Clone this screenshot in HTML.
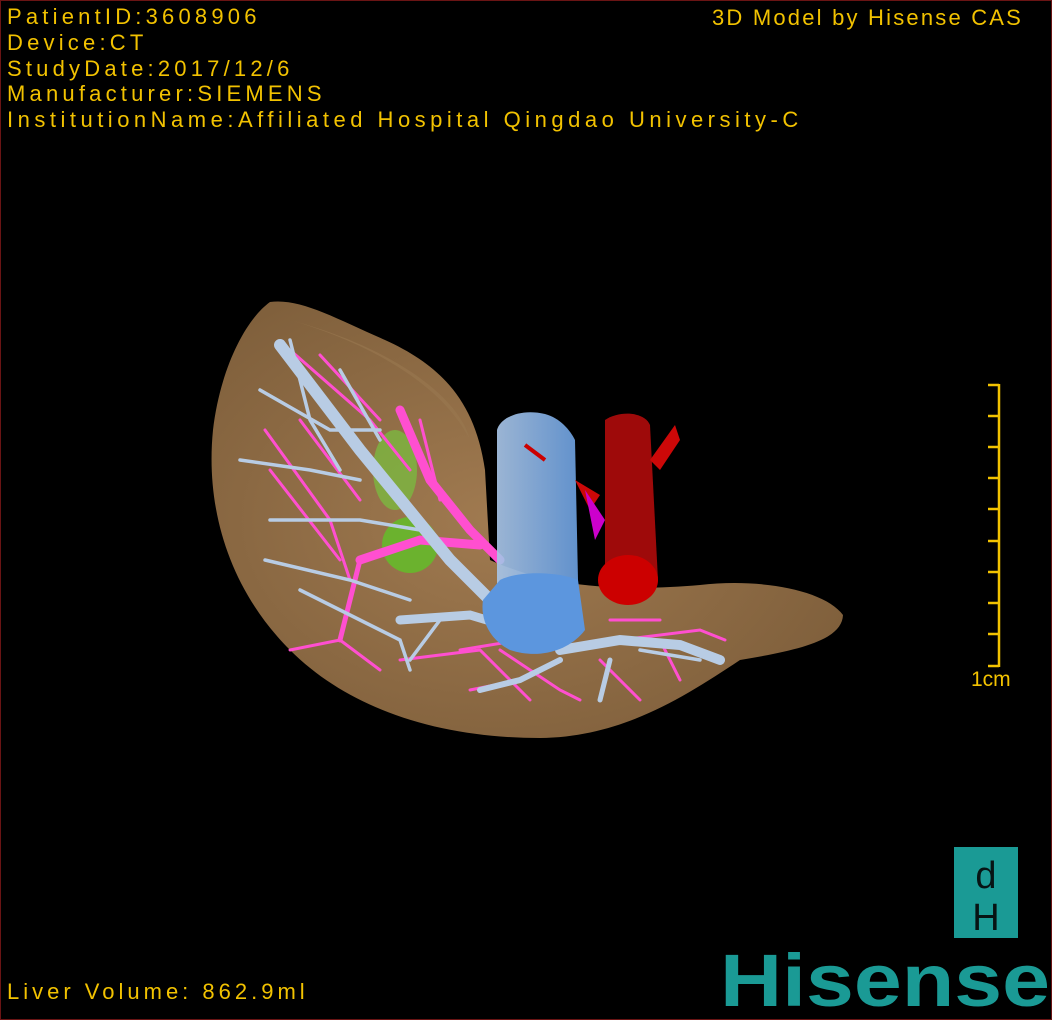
<!DOCTYPE html>
<html><head><meta charset="utf-8"><style>
html,body{margin:0;padding:0;background:#000;}
#wrap{position:relative;width:1050px;height:1018px;border:1px solid #6a1414;background:#000;overflow:hidden;font-family:"Liberation Sans","Noto Sans CJK SC",sans-serif;}
.t{position:absolute;color:#f2c200;font-size:22px;letter-spacing:4.2px;white-space:nowrap;line-height:26px;}
</style></head><body><div id="wrap">
<div class="t" style="left:6px;top:3px">PatientID:3608906</div>
<div class="t" style="left:6px;top:29px">Device:CT</div>
<div class="t" style="left:6px;top:55px">StudyDate:2017/12/6</div>
<div class="t" style="left:6px;top:80px">Manufacturer:SIEMENS</div>
<div class="t" style="left:6px;top:106px;letter-spacing:4.5px">InstitutionName:Affiliated Hospital Qingdao University-C</div>
<div class="t" style="left:711px;top:4px;letter-spacing:2.2px">3D Model by Hisense CAS</div>
<div class="t" style="left:6px;top:978px;letter-spacing:4px">Liver Volume:  862.9ml</div>
<div class="t" style="left:970px;top:666px;font-size:21px;letter-spacing:0">1cm</div>
<svg width="1052" height="1020" style="position:absolute;left:-1px;top:-1px" xmlns="http://www.w3.org/2000/svg">
<defs>
<radialGradient id="lg" cx="0.45" cy="0.5" r="0.6"><stop offset="0" stop-color="#a07a50"/><stop offset="1" stop-color="#80603c"/></radialGradient>
<linearGradient id="bg" x1="0" x2="1"><stop offset="0" stop-color="#a8c4e6"/><stop offset="1" stop-color="#6a9ede"/></linearGradient>
</defs>
<path d="M270,302 C300,298 335,318 385,340 C440,365 475,400 485,470 L490,560 C560,592 640,590 700,585 C760,578 825,590 843,615 C842,640 800,650 740,660 C680,700 620,737 540,738 C440,738 350,710 290,650 C230,590 205,510 213,430 C220,370 245,320 270,302 Z" fill="url(#lg)"/>
<path d="M290,320 C360,340 440,380 470,440 C460,400 400,350 290,320Z" fill="#9a7850" opacity="0.6"/>
<ellipse cx="410" cy="545" rx="28" ry="28" fill="#6bb22e"/>
<ellipse cx="395" cy="470" rx="22" ry="40" fill="#7cb840" opacity="0.8"/>
<g stroke="#ff4fd0" stroke-linecap="round" fill="none">
<path d="M400,410 L430,480 L470,530 L500,560" stroke-width="9"/>
<path d="M360,560 L420,540 L480,545" stroke-width="9"/>
<path d="M360,560 L340,640" stroke-width="5"/>
<g stroke-width="3">
<path d="M290,350 L370,420 L410,470"/><path d="M320,355 L380,420"/><path d="M265,430 L330,520 L350,580"/>
<path d="M270,470 L340,560"/><path d="M300,420 L360,500"/><path d="M420,420 L440,500"/>
<path d="M290,650 L340,640 L380,670"/><path d="M400,660 L480,650 L530,700"/><path d="M460,650 L520,640"/>
<path d="M500,650 L560,690 L580,700"/><path d="M620,640 L700,630 L725,640"/><path d="M600,660 L640,700"/>
<path d="M660,640 L680,680"/><path d="M470,690 L520,680"/><path d="M610,620 L660,620"/>
</g></g>
<g stroke="#b8cce4" stroke-linecap="round" fill="none">
<path d="M280,345 L360,450 L450,560 L490,600" stroke-width="12"/>
<path d="M400,620 L470,615 L520,630" stroke-width="9"/>
<path d="M560,650 L620,640 L680,645 L720,660" stroke-width="10"/>
<path d="M560,660 L520,680 L480,690" stroke-width="6"/>
<path d="M610,660 L600,700" stroke-width="5"/>
<g stroke-width="3.5">
<path d="M290,340 L310,420 L340,470"/><path d="M260,390 L330,430 L380,430"/><path d="M240,460 L310,470 L360,480"/>
<path d="M270,520 L360,520 L420,530"/><path d="M265,560 L350,580 L410,600"/><path d="M300,590 L400,640 L410,670"/>
<path d="M340,370 L380,440"/><path d="M440,620 L410,660"/><path d="M640,650 L700,660"/>
</g></g>
<path d="M497,430 C500,418 520,408 545,414 C560,418 570,430 575,440 L578,580 C575,600 545,605 520,600 L497,590 Z" fill="url(#bg)" opacity="0.92"/>
<path d="M500,580 C520,570 560,572 578,580 L585,630 C570,650 540,660 510,650 C490,640 480,620 483,600 Z" fill="#5c96de"/>
<path d="M525,445 L545,460" stroke="#cc0000" stroke-width="4"/>
<path d="M605,420 C620,410 645,412 650,425 L658,580 C655,600 625,610 605,590 Z" fill="#9e0a0a"/>
<ellipse cx="628" cy="580" rx="30" ry="25" fill="#cc0000"/>
<path d="M650,460 L675,425 L680,440 L660,470 Z" fill="#cc0808"/>
<path d="M575,480 L600,495 L590,510Z" fill="#cc0808"/>
<path d="M585,490 L605,520 L595,540Z" fill="#cc00cc"/>
<g stroke="#f2c200" stroke-width="2.5"><line x1="999" y1="384" x2="999" y2="667"/>
<line x1="988" y1="385" x2="999" y2="385"/><line x1="988" y1="416" x2="999" y2="416"/><line x1="988" y1="447" x2="999" y2="447"/><line x1="988" y1="478" x2="999" y2="478"/><line x1="988" y1="509" x2="999" y2="509"/><line x1="988" y1="541" x2="999" y2="541"/><line x1="988" y1="572" x2="999" y2="572"/><line x1="988" y1="603" x2="999" y2="603"/><line x1="988" y1="634" x2="999" y2="634"/><line x1="988" y1="666" x2="999" y2="666"/></g>
<rect x="954" y="847" width="64" height="91" fill="#1a9a95"/>
<text x="986" y="888" fill="#071414" font-family="Liberation Sans,sans-serif" font-size="38" text-anchor="middle">d</text>
<text x="986" y="930" fill="#071414" font-family="Liberation Sans,sans-serif" font-size="38" text-anchor="middle">H</text>
<text x="720" y="1006" fill="#1a9a95" font-family="Liberation Sans,sans-serif" font-size="74" font-weight="bold" textLength="330" lengthAdjust="spacingAndGlyphs">Hisense</text>
</svg>
</div></body></html>
